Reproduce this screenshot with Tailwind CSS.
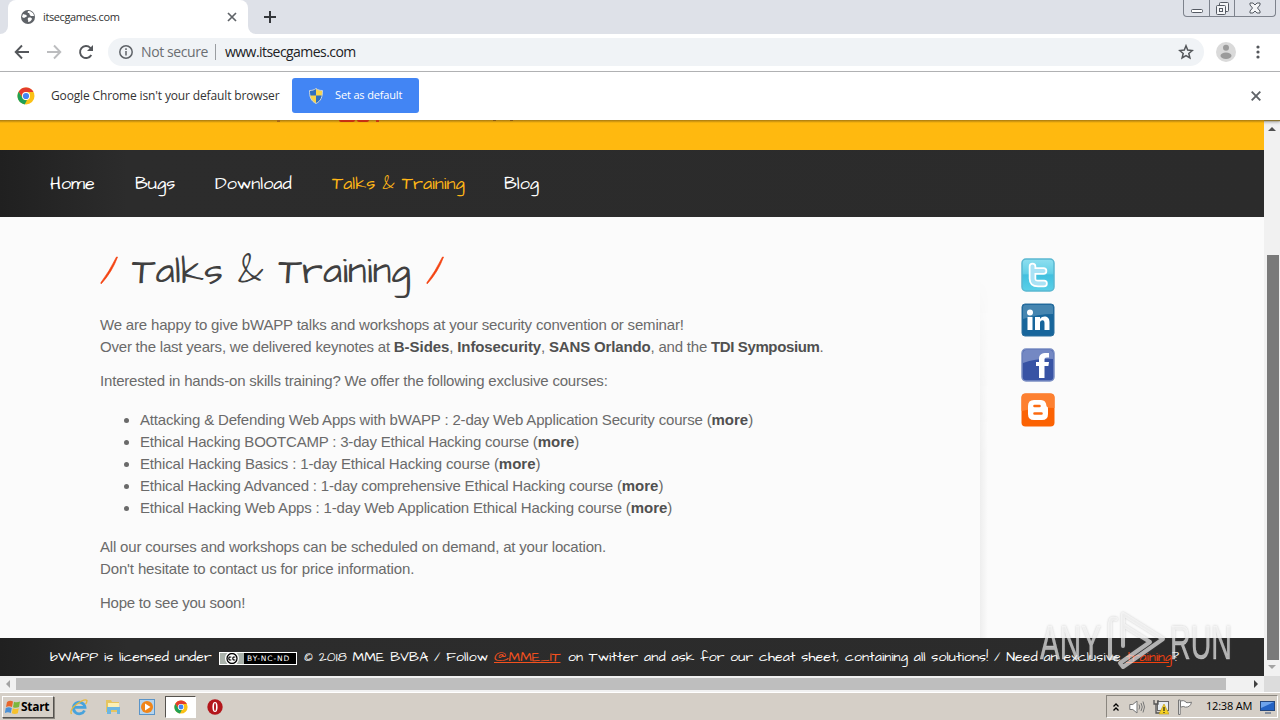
<!DOCTYPE html>
<html lang="en">
<head>
  <meta charset="UTF-8">
  <meta name="viewport" content="width=device-width, initial-scale=1.0">
  <title>itsecgames.com</title>
  <script src="https://cdn.jsdelivr.net/npm/@tailwindcss/browser@4"></script>
</head>
<body class="w-[1280px] h-[720px] overflow-hidden flex flex-col bg-white font-['Open_Sans',sans-serif]">

  <!-- Tab strip -->
  <div class="relative h-[34px] shrink-0 flex bg-[#dee1e8]">
    <div class="w-2 bg-white"><div class="h-full bg-[#dee1e8] rounded-br-lg"></div></div>
    <div class="w-60 flex items-center px-3 bg-white rounded-t-lg">
      <svg class="w-4 h-4" viewBox="0 0 16 16"><circle cx="8" cy="8" r="7" fill="#5f6368"/><path d="M3 5c2 1 3 0 4 2 0 1-2 1-3 2L2 8zM8 2c-1 2 0 2 1 2 1 1 0 2 2 3h3c0-3-3-5-6-5zM8 9c2-1 4 0 4 1-1 2-2 3-4 3 1-2-1-2 0-4z" fill="#fff"/></svg>
      <span class="ml-[7px] text-[11px] tracking-[-0.4px] text-[#333]">itsecgames.com</span>
      <svg class="ml-auto w-2.5 h-2.5 -mr-px" viewBox="0 0 10 10"><path d="M1 1l8 8M9 1l-8 8" stroke="#5f6368" stroke-width="1.7"/></svg>
    </div>
    <div class="w-2 bg-white"><div class="h-full bg-[#dee1e8] rounded-bl-lg"></div></div>
    <svg class="ml-2 mt-[11px] w-3 h-3" viewBox="0 0 12 12"><path d="M6 0v12M0 6h12" stroke="#34363a" stroke-width="2"/></svg>
    <div class="absolute right-1 top-0 w-[93px] h-[17px] flex border border-t-0 border-[#7d828c] rounded-b">
      <div class="w-[25px] flex items-end justify-center pb-[3px]"><svg class="w-3 h-1" viewBox="0 0 12 4"><rect x=".5" y=".5" width="11" height="3" rx="1" fill="#fff" stroke="#555a63"/></svg></div>
      <div class="w-[26px] flex items-center justify-center border-x border-[#7d828c]"><svg class="w-[13px] h-[13px]" viewBox="0 0 13 13" fill="#f4f5f7" stroke="#555a63"><rect x="3.500" y=".5" width="9" height="9" rx="1"/><rect x=".5" y="3.500" width="9" height="9" rx="1"/><rect x="3.500" y="6.500" width="3" height="3"/></svg></div>
      <div class="grow flex items-center justify-center"><svg class="w-3 h-3" viewBox="0 0 12 12"><path d="M1 1h3l2 2 2-2h3v2L8.500 6 11 9v2H8L6 9l-2 2H1V9l2.500-3L1 3z" fill="#f4f5f7" stroke="#555a63"/></svg></div>
    </div>
  </div>

  <!-- Toolbar -->
  <div class="h-[38px] shrink-0 flex items-center bg-white border-b border-[#b3b4b6] pl-[14px] pb-0.5">
    <svg class="w-4 h-4" viewBox="0 0 16 16"><path d="M15 8H2M8 1.500L1.700 8 8 14.500" fill="none" stroke="#54575b" stroke-width="1.900"/></svg>
    <svg class="ml-4 w-4 h-4" viewBox="0 0 16 16"><path d="M1 8h13M8 1.500L14.300 8 8 14.500" fill="none" stroke="#bcbdbf" stroke-width="1.900"/></svg>
    <svg class="ml-4 w-4 h-4" viewBox="0 0 16 16"><path d="M13.300 11A6 6 0 1 1 12.300 3.800L14 5.500" fill="none" stroke="#54575b" stroke-width="1.900"/><path d="M15 1v6H9z" fill="#54575b"/></svg>
    <div class="ml-[14px] w-[1096px] h-7 flex items-center rounded-full bg-[#f0f3f6] pl-[11px] pr-[10px]">
      <svg class="w-[14px] h-[14px]" viewBox="0 0 14 14"><circle cx="7" cy="7" r="6.200" fill="none" stroke="#5f6368" stroke-width="1.500"/><path d="M7 6v4.500M7 3.300v1.600" stroke="#5f6368" stroke-width="1.500"/></svg>
      <span class="ml-2 w-[67px] text-sm whitespace-nowrap tracking-[-0.4px] text-[#6b6e72]">Not secure</span>
      <span class="ml-[7px] w-px h-4 bg-[#9a9da1]"></span>
      <span class="ml-[9px] text-sm tracking-[-0.55px] text-[#202124]">www.itsecgames.com</span>
      <svg class="ml-auto w-4 h-4" viewBox="0 0 16 16"><path d="M8 1.800l1.700 4.300 4.600.4-3.500 3 1.100 4.500L8 11.600 4.100 14l1.100-4.500-3.500-3 4.600-.4z" fill="none" stroke="#54575b" stroke-width="1.500"/></svg>
    </div>
    <svg class="ml-3 w-5 h-5" viewBox="0 0 20 20"><circle cx="10" cy="10" r="10" fill="#dadada"/><circle cx="10" cy="5.800" r="3" fill="#9b9b9b"/><ellipse cx="10" cy="13.800" rx="5.500" ry="3.200" fill="#9b9b9b"/></svg>
    <svg class="ml-[20px] w-1 h-[14px]" viewBox="0 0 4 14" fill="#54575b"><circle cx="2" cy="2" r="1.600"/><circle cx="2" cy="7" r="1.600"/><circle cx="2" cy="12" r="1.600"/></svg>
  </div>

  <!-- Default browser bar -->
  <div class="relative z-10 h-12 shrink-0 flex items-center bg-white pl-[17px] pr-[19px] pb-px shadow-[0_1px_1px_#8a7430,0_2px_3px_rgba(0,0,0,0.35)]">
    <svg class="w-[18px] h-[18px]" viewBox="0 0 18 18"><circle cx="9" cy="9" r="8.500" fill="#fbc116"/><path d="M1.600 4.800A8.500 8.500 0 0 1 16.500 5H9a4 4 0 0 0-3.800 5.200z" fill="#e33b2e"/><path d="M1.600 4.800L5.600 11A4 4 0 0 0 10 13l-2.300 4.400A8.500 8.500 0 0 1 1.600 4.800z" fill="#1fa055"/><circle cx="9" cy="9" r="4" fill="#fff"/><circle cx="9" cy="9" r="3.100" fill="#4285f4"/></svg>
    <span class="ml-4 w-[228px] text-xs whitespace-nowrap tracking-[-0.14px] text-[#333]">Google Chrome isn't your default browser</span>
    <div class="ml-[13px] w-[127px] h-[35px] flex items-center rounded-[3px] bg-[#4285f4] pl-4 text-white">
      <svg class="w-4 h-4" viewBox="0 0 16 16"><path d="M8 .5C6 2 4 2.500 1.500 2.500 1.500 9 3 13 8 15.500z" fill="#2f6fc0"/><path d="M8 .5c2 1.500 4 2 6.500 2C14.500 9 13 13 8 15.500z" fill="#f7d44c"/><path d="M1.700 7.500H8v8C4 13.500 2.200 11 1.700 7.500z" fill="#f7d44c"/><path d="M8 7.500h6.300C13.800 11 12 13.500 8 15.500z" fill="#2f6fc0"/><path d="M8 .5C6 2 4 2.500 1.500 2.500 1.500 9 3 13 8 15.500 13 13 14.500 9 14.500 2.500 12 2.500 10 2 8 .5z" fill="none" stroke="#c9d3dc"/></svg>
      <span class="ml-[11px] text-[11px] tracking-[-0.15px] whitespace-nowrap">Set as default</span>
    </div>
    <svg class="ml-auto w-[10px] h-[10px]" viewBox="0 0 10 10"><path d="M.7.7l8.600 8.600M9.300.7L.7 9.300" stroke="#5f6368" stroke-width="1.900"/></svg>
  </div>

  <div class="h-[556px] shrink-0 flex">
    <!-- Page -->
    <div class="w-[1264px] flex flex-col">
      <div class="relative z-20 h-[30px] shrink-0 pl-[277px] flex bg-linear-to-b from-[#a87a10] via-[#ffb90f] via-10% to-[#ffb90f]">
        <span class="w-[3px] h-0.5 bg-[#a5671b]"></span>
        <span class="ml-[59px] w-4 h-0.5 rounded-b-full bg-[#c63012]"></span>
        <span class="ml-0.5 w-3 h-0.5 rounded-b-full bg-[#c63012]"></span>
        <span class="ml-[7px] w-[3px] h-0.5 bg-[#c63815]"></span>
        <span class="ml-[114px] w-[3px] h-px bg-[#8a5b14]"></span>
        <span class="ml-[14px] w-[3px] h-px bg-[#8a5b14]"></span>
      </div>

      <nav class="h-[67px] shrink-0 flex items-center pl-[50px] text-lg leading-6 text-white bg-linear-to-r from-[#202020] via-[#2c2c2c] via-10% to-[#2b2b2b] font-['Architects_Daughter','Lato',cursive]">
        <a class="w-[85px]">Home</a>
        <a class="w-[80px]">Bugs</a>
        <a class="w-[117px]">Download</a>
        <a class="w-[172px] text-[#ffb717]">Talks &amp; Training</a>
        <a>Blog</a>
      </nav>

      <main class="h-[421px] shrink-0 flex bg-[#fbfbfb]">
        <div class="w-[980px] pl-[100px] text-[15px] leading-[22px] tracking-[-0.18px] text-[#6a6a6a] font-['Liberation_Sans',sans-serif]">
          <h1 class="h-[97px] pt-[31px] flex text-[37.8px] leading-[48px] tracking-normal text-[#404040] font-['Architects_Daughter','Lato',cursive]">
            <svg class="mt-[7px] w-[18px] h-8" viewBox="0 0 18 32"><path d="M17.500 2Q12 17 1.500 28.500q-1 .5-.5-1Q9 17 16.500 2z" fill="#f4400e" stroke="#f4400e" stroke-width=".7"/></svg>
            <span class="ml-[14px] w-[280px] whitespace-nowrap">Talks &amp; Training</span>
            <svg class="ml-[14px] mt-[7px] w-[18px] h-8" viewBox="0 0 18 32"><path d="M17.500 2Q12 17 1.500 28.500q-1 .5-.5-1Q9 17 16.500 2z" fill="#f4400e" stroke="#f4400e" stroke-width=".7"/></svg>
          </h1>
          <p>We are happy to give bWAPP talks and workshops at your security convention or seminar!<br>
            <span class="tracking-[-0.21px]">Over the last years, we delivered keynotes at <b class="tracking-[-0.05px] text-[#505050]">B-Sides</b>, <b class="tracking-[-0.1px] text-[#505050]">Infosecurity</b>, <b class="tracking-[-0.15px] text-[#505050]">SANS Orlando</b>, and the <b class="tracking-[-0.38px] text-[#505050]">TDI Symposium</b>.</span></p>
          <p class="mt-3">Interested in hands-on skills training? We offer the following exclusive courses:</p>
          <ul class="my-[17px] pl-10 list-disc tracking-[-0.17px]">
            <li>Attacking &amp; Defending Web Apps with bWAPP : 2-day Web Application Security course (<b class="tracking-normal text-[#505050]">more</b>)</li>
            <li class="tracking-[-0.2px]">Ethical Hacking BOOTCAMP : 3-day Ethical Hacking course (<b class="tracking-normal text-[#505050]">more</b>)</li>
            <li class="tracking-[-0.16px]">Ethical Hacking Basics : 1-day Ethical Hacking course (<b class="tracking-normal text-[#505050]">more</b>)</li>
            <li class="tracking-[-0.19px]">Ethical Hacking Advanced : 1-day comprehensive Ethical Hacking course (<b class="tracking-normal text-[#505050]">more</b>)</li>
            <li class="tracking-[-0.17px]">Ethical Hacking Web Apps : 1-day Web Application Ethical Hacking course (<b class="tracking-normal text-[#505050]">more</b>)</li>
          </ul>
          <p>All our courses and workshops can be scheduled on demand, at your location.<br><span class="tracking-[-0.14px]">Don't hesitate to contact us for price information.</span></p>
          <p class="mt-3 tracking-[-0.24px]">Hope to see you soon!</p>
        </div>
        <div class="mt-[60px] w-2 bg-linear-to-r from-[#eeeeee] to-[#fbfbfb] mask-t-from-50%"></div>
        <div class="pl-[33px] pt-[41px] flex flex-col gap-[11px]">
          <svg class="w-[34px] h-[34px]" viewBox="0 0 34 34"><defs><linearGradient id="tw" x2="0" y2="1"><stop stop-color="#8edff0"/><stop offset=".45" stop-color="#62cfe6"/><stop offset=".5" stop-color="#42c0df"/><stop offset="1" stop-color="#5bd0e8"/></linearGradient></defs><rect x="1" y="1" width="32" height="32" rx="4" fill="url(#tw)" stroke="#5bb8d1" stroke-width="1.500"/><path d="M11.500 8.500v12q0 5 5.500 5h6M11.500 13h11" fill="none" stroke="#fff" stroke-width="7.500" stroke-linecap="round"/><path d="M11.500 8.500v12q0 5 5.500 5h6M11.500 13h11" fill="none" stroke="#a9e2f5" stroke-width="4" stroke-linecap="round" stroke-linejoin="round"/></svg>
          <svg class="w-[34px] h-[34px]" viewBox="0 0 34 34"><rect x="1" y="1" width="32" height="32" rx="3" fill="#17659b" stroke="#2b6f9d"/><path d="M2 4q0-2 2-2h26q2 0 2 2v7Q17 11 2 16z" fill="#4585b0"/><circle cx="9" cy="9.500" r="3" fill="#fff"/><path d="M6.500 14h5v13h-5zM14 14h5v2c3-4 9.500-3 9.500 3v8h-5v-7c0-4-4.500-3-4.500 0v7h-5z" fill="#fff"/></svg>
          <svg class="w-[34px] h-[34px]" viewBox="0 0 34 34"><rect x="1" y="1" width="32" height="32" rx="4" fill="#3853a4" stroke="#7b8fc4" stroke-width="1.500"/><path d="M2 5q0-3 3-3h24q3 0 3 3v6Q17 10 2 15z" fill="#7488c3"/><path d="M18 30V18h-3v-4h3v-3c0-5 3-6.500 10-6v4.500c-3 0-4.500 0-4.500 2V14H28l-.6 4h-3.900v12z" fill="#fff"/></svg>
          <svg class="w-[34px] h-[34px]" viewBox="0 0 34 34"><rect x=".5" y=".5" width="33" height="33" rx="4" fill="#fb6203"/><path d="M.5 5q0-4.500 4.500-4.500h24q4.500 0 4.500 4.500v10Q17 14 .5 18z" fill="#fd8030"/><path d="M13 7h7q5 0 5.500 6 .3 1 1 1 .5 0 .5 2v5q0 6-6 6h-8q-6 0-6-6v-8q0-6 6-6z" fill="#fff"/><path d="M13.500 13h5M13.500 20.500h7" stroke="#fb6a10" stroke-width="2.600" stroke-linecap="round"/></svg>
        </div>
      </main>

      <footer class="h-[38px] shrink-0 flex items-center pl-[50px] text-sm text-white whitespace-nowrap bg-linear-to-r from-[#202020] via-[#2c2c2c] via-10% to-[#2b2b2b] font-['Architects_Daughter','Lato',cursive]">
        <span class="w-[169px] tracking-[0.08px]">bWAPP is licensed under</span>
        <span class="mt-[3px] w-[78px] h-[13px] flex items-center border border-white bg-black text-[7.5px] leading-none tracking-[0.9px] text-white font-['DejaVu_Sans',sans-serif]">
          <svg class="w-6 h-[11px] bg-[#aab2ab]" viewBox="0 0 24 11"><circle cx="12" cy="5.500" r="7" fill="#fff"/><circle cx="12" cy="5.500" r="5" fill="#fff" stroke="#000" stroke-width="1.300"/><path d="M11.300 4.200q-2.500-.8-2.500 1.300t2.500 1.300M15.300 4.200q-2.500-.8-2.500 1.300t2.500 1.300" fill="none" stroke="#000" stroke-width="1.200"/></svg>
          <span class="ml-[3px]">BY-NC-ND</span>
        </span>
        <span class="ml-[7px] w-[190px] tracking-[0.12px]">© 2018 MME BVBA / Follow</span>
        <a class="w-[68px] underline text-[#f4511e]">@MME_IT</a>
        <span class="ml-[6px] w-[551px] tracking-[0.11px]">on Twitter and ask for our cheat sheet, containing all solutions! / Need an exclusive</span>
        <a class="ml-[7px] underline text-[#f4400e]">training</a><span>?</span>
      </footer>
    </div>

    <!-- Vertical scrollbar -->
    <div class="w-4 flex flex-col items-center bg-[#f1f1f1]">
      <svg class="mt-[7px] w-2 h-1" viewBox="0 0 8 4"><path d="M0 4l4-4 4 4z" fill="#505050"/></svg>
      <div class="mt-[124px] ml-px w-3 h-[405px] bg-[#7a7a7a]"></div>
      <svg class="mt-[5px] w-2 h-1" viewBox="0 0 8 4"><path d="M0 0l4 4 4-4z" fill="#a3a3a3"/></svg>
    </div>
  </div>

  <!-- Horizontal scrollbar -->
  <div class="h-4 shrink-0 flex items-center bg-[#f1f1f1]">
    <svg class="ml-[6px] w-1 h-2" viewBox="0 0 4 8"><path d="M4 0L0 4l4 4z" fill="#a3a3a3"/></svg>
    <div class="ml-[6px] w-[1210px] h-3 bg-[#bebebe]"></div>
    <svg class="ml-7 w-1 h-2" viewBox="0 0 4 8"><path d="M0 0l4 4-4 4z" fill="#404040"/></svg>
    <div class="ml-auto w-4 h-full bg-[#dcdcdc]"></div>
  </div>

  <!-- Taskbar -->
  <div class="h-7 shrink-0 flex items-center pl-0.5 bg-[#d5cfc7] border-t border-white">
    <div class="w-[52px] h-[22px] flex items-center border border-t-white border-l-white border-r-[#55524e] border-b-[#55524e] shadow-[1px_1px_0_#8a867f] pl-0.5 text-black">
      <svg class="w-4 h-4" viewBox="0 0 16 16"><path d="M2 3q3-2 6-.5L7 8Q4 6.500 1 8z" fill="#e8662b"/><path d="M9 2.800q3 1.200 6-.3L14 8q-3 1.500-6 .2z" fill="#7cb73d"/><path d="M.8 9q3-1.500 6 0l-1 5q-3-1.500-6 0z" fill="#4a90d6"/><path d="M7.800 9.300q3 1.300 6 0l-1 5q-3 1.500-6 0z" fill="#f6c12c"/></svg>
      <span class="text-xs font-bold tracking-[-0.3px]">Start</span>
    </div>
    <svg class="ml-[16px] w-[18px] h-[18px]" viewBox="0 0 18 18"><path d="M14.500 12.500A5.800 5.800 0 1 1 15 9.300H4" fill="none" stroke="#48a3dc" stroke-width="2.800"/><path d="M1.500 16Q-1 12 7 6t10-3.500q0 2-1.500 3.500" fill="none" stroke="#e8b93c" stroke-width="1.300"/></svg>
    <svg class="ml-[17px] w-4 h-4" viewBox="0 0 16 16"><path d="M1 1h5l1 2h7v10H1z" fill="#e6c560"/><path d="M3 4h11v4H3z" fill="#fbf0b5"/><path d="M2 8h13v7h-3v-4H6v4H2z" fill="#6cb6e2"/></svg>
    <svg class="ml-[18px] w-4 h-4" viewBox="0 0 16 16"><rect x=".5" y=".5" width="15" height="15" fill="#b5d4ee" stroke="#5a94c8"/><circle cx="8" cy="8" r="6" fill="#f08519"/><path d="M6 4.500L11.500 8 6 11.500z" fill="#fff"/></svg>
    <div class="ml-[10px] w-[31px] h-[22px] flex items-center justify-center bg-white border border-t-[#55524e] border-l-[#55524e] border-r-white border-b-white">
      <svg class="w-[14px] h-[14px]" viewBox="0 0 18 18"><circle cx="9" cy="9" r="8.500" fill="#fbc116"/><path d="M1.600 4.800A8.500 8.500 0 0 1 16.500 5H9a4 4 0 0 0-3.800 5.200z" fill="#e33b2e"/><path d="M1.600 4.800L5.600 11A4 4 0 0 0 10 13l-2.300 4.400A8.500 8.500 0 0 1 1.600 4.800z" fill="#1fa055"/><circle cx="9" cy="9" r="4" fill="#fff"/><circle cx="9" cy="9" r="3.100" fill="#4285f4"/></svg>
    </div>
    <svg class="ml-[11px] w-4 h-4" viewBox="0 0 16 16"><circle cx="8" cy="8" r="7.700" fill="#b3161b"/><ellipse cx="8" cy="8" rx="2.600" ry="5" fill="#fff"/><ellipse cx="8" cy="8" rx="1" ry="4" fill="#b3161b"/></svg>

    <div class="ml-auto mr-0.5 w-[172px] h-[23px] flex items-center border border-t-[#8a867f] border-l-[#8a867f] border-r-white border-b-white pl-[6px]">
      <svg class="w-[6px] h-2" viewBox="0 0 6 8"><path d="M.5 3.500L3 1l2.500 2.500M.5 7.500L3 5l2.500 2.500" fill="none" stroke="#000" stroke-width="1.300"/></svg>
      <svg class="ml-[10px] w-4 h-4" viewBox="0 0 16 16" fill="none" stroke="#777"><path d="M.8 5.500h3L8 2v12l-4.200-3.500h-3z" fill="#fff"/><path d="M10 5.500q1.500 2.500 0 5M12 4q2.500 4 0 8M14 2.500q3 5.500 0 11"/></svg>
      <svg class="ml-2 w-4 h-4" viewBox="0 0 16 16"><rect x="4.500" y="2.500" width="11" height="9" fill="#e8edf2" stroke="#666"/><path d="M1 1v4h4V1M3 5v9h4" fill="none" stroke="#555" stroke-width="1.300"/><path d="M11 5l5 10H6z" fill="#f6d223" stroke="#b89613" stroke-width=".6"/><path d="M11 8v4M11 13v1" stroke="#222" stroke-width="1.200"/></svg>
      <svg class="ml-2 w-4 h-4" viewBox="0 0 16 16" fill="#fff" stroke="#777"><path d="M1.500 1v14.500h1.700V1z"/><path d="M3.500 2q3-1 5 .5 0 2 6 .7-1 5-6 5-2-1.500-5 0z"/></svg>
      <span class="ml-[13px] w-[46px] text-[11px] tracking-[-0.2px] whitespace-nowrap text-black">12:38 AM</span>
      <svg class="ml-2 w-[15px] h-[14px]" viewBox="0 0 15 14"><rect x=".5" y="1.500" width="14" height="9" fill="#2463c4" stroke="#25477d"/><path d="M1 2h13L1 8z" fill="#6ea4ec"/><path d="M5 13h6" stroke="#6b7a90" stroke-width="1.500"/></svg>
    </div>
  </div>

  <!-- Watermark over the page -->
  <svg class="absolute left-[1036px] top-[606px] w-[200px] h-[68px] z-20 drop-shadow-[0_0_1px_rgba(90,90,90,0.45)]" viewBox="0 0 200 68" fill="#fff" fill-opacity=".62" stroke="#fff" stroke-opacity=".5" stroke-width=".4" font-family="Liberation Sans Narrow, Liberation Sans" font-size="49">
    <text x="4" y="53" textLength="61" lengthAdjust="spacingAndGlyphs">ANY</text>
    <text x="134" y="53" textLength="62" lengthAdjust="spacingAndGlyphs">RUN</text>
    <g fill="none" stroke-opacity=".62" stroke-width="4" stroke-linejoin="round" stroke-linecap="round"><path d="M80 13q-6-2-6 4v35h6M87 40V8l40 25-40 28-3-4 30-21-27-17"/></g>
  </svg>

</body>
</html>
